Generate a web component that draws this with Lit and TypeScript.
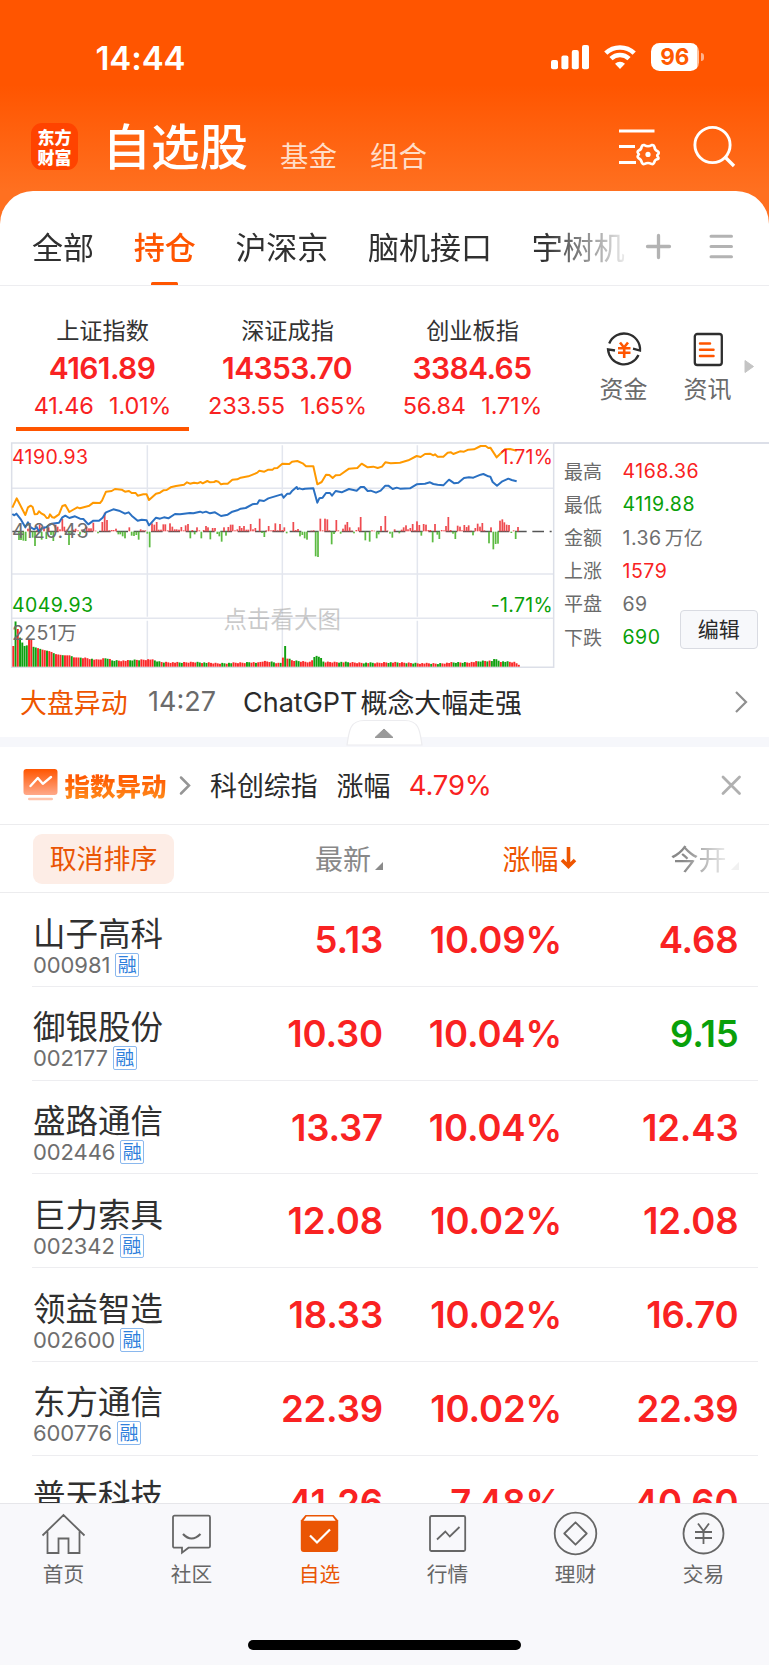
import { LitElement, html, css, svg } from "lit";
import { customElement } from "lit/decorators.js";
import { classMap } from "lit/directives/class-map.js";

const CJK = css`"Noto Sans CJK SC", "Noto Sans", sans-serif`;
const NUM = css`Inter, "Noto Sans CJK SC", sans-serif`;

const base = css`
  :host, * { box-sizing: border-box; }
  svg { display: block; overflow: visible; flex: none; }
  .red { color: #f92222; }
  .green { color: #09a009; }
  .grey { color: #6e6e6e; }
`;

/* ---------- status bar + title ---------- */
@customElement("app-header")
class AppHeader extends LitElement {
  static styles = [base, css`
    :host { display: block; height: 191px; color: #fff; flex: none; }
    .status { height: 115px; padding: 43px 65px 0 95.5px; display: flex; justify-content: space-between; }
    .time { font: 600 33px/30px ${NUM}; letter-spacing: -0.1px; }
    .signals { display: flex; align-items: flex-start; }
    .wifi { margin: 2px 15px 0 14.5px; }
    .bars { margin-top: 2px; }
    .battery { width: 48.5px; height: 28px; border-radius: 8.5px; background: linear-gradient(90deg, #fff 96%, #ffc3a0 96%); color: #ff5a00;
      font: 700 22.5px/28px ${NUM}; text-align: center; }
    .nub { width: 3.5px; height: 8px; margin: 10px 0 0 1.5px; border-radius: 0 4px 4px 0; background: rgba(255,255,255,.55); }
    .bar { height: 76px; display: flex; padding: 0 34px 0 31px; }
    .logo { width: 47px; height: 47px; margin-top: 8px; border-radius: 11px; background: #ff4300; font: 900 17px/19.5px ${CJK};
      display: flex; flex-direction: column; align-items: center; justify-content: center; }
    .title { margin: -1.5px 0 0 24.5px; font: 500 48.5px/60px ${CJK}; white-space: nowrap; }
    .sub { margin: 20px 0 0 33px; font: 400 28.5px/40px ${CJK}; color: #ffddc8; white-space: nowrap; }
    .title + .sub { margin-left: 32px; }
    .grow { flex: 1; }
    .tools { display: flex; margin-top: 9.5px; gap: 31px; }
  `];
  render() {
    return html`
      <div class="status">
        <div class="time">14:44</div>
        <div class="signals">
          <svg class="bars" width="38" height="24" fill="#fff">
            <rect x="0" y="15" width="7" height="9.2" rx="2"/><rect x="10.4" y="10.5" width="7" height="13.7" rx="2"/>
            <rect x="20.8" y="5" width="7" height="19.2" rx="2"/><rect x="31" y="0" width="7" height="24.2" rx="2"/>
          </svg>
          <svg class="wifi" width="32" height="24" fill="none" stroke="#fff" stroke-width="4.6">
            <path d="M1.8 8.2a20.4 20.4 0 0 1 28.4 0"/><path d="M7 13.6a13 13 0 0 1 18 0"/>
            <path d="M16 24l-5-5.2a7.4 7.4 0 0 1 10 0z" fill="#fff" stroke="none"/>
          </svg>
          <div class="battery">96</div><div class="nub"></div>
        </div>
      </div>
      <div class="bar">
        <div class="logo"><span>东方</span><span>财富</span></div>
        <h1 class="title">自选股</h1>
        <span class="sub">基金</span><span class="sub">组合</span>
        <div class="grow"></div>
        <div class="tools">
          <svg width="43" height="44" fill="none" stroke="#fff" stroke-width="3">
            <path d="M1 6h35.5M1 21.5h16M1 37.5h17"/>
            <path stroke-width="2.6" stroke-linejoin="round" d="M26.3 20.1Q30 22.3 33.7 20.1Q35.6 19.6 36.3 21.5Q36.7 25.2 40 26.5Q41.400 27.700 40 29.500Q38.400 30 40 32Q41 33.600 40 34Q36.700 34.300 36 37.900Q35 39.700 33.300 38.900Q30 37 26.700 38.900Q25 39.700 24 37.900Q23.300 34.300 20.300 33Q19 31.500 20.300 30Q21.600 29.400 20.300 28.500Q19 27 20.300 25.800Q23.300 24.800 23.700 21.500Q24.400 19.600 26.300 20.100z"/>
            <circle cx="30" cy="29.4" r="2.6" fill="#fff" stroke="none"/>
          </svg>
          <svg width="43" height="44" fill="none" stroke="#fff" stroke-width="2.9">
            <circle cx="20.5" cy="20" r="17.6"/><path d="M32.5 31.500l9.500 9.500" stroke-width="3.3"/>
          </svg>
        </div>
      </div>`;
  }
}

/* ---------- group tabs ---------- */
@customElement("group-tabs")
class GroupTabs extends LitElement {
  static styles = [base, css`
    :host { display: flex; height: 95px; border-bottom: 1px solid #ededf0; background: #fff; border-radius: 33px 33px 0 0; padding: 0 36px 0 32px; align-items: stretch; flex: none; }
    .scroll { display: flex; gap: 39.7px; width: 596px; overflow: hidden; flex: none;
      -webkit-mask-image: linear-gradient(90deg, #000 86%, transparent 101%); mask-image: linear-gradient(90deg, #000 86%, transparent 101%); }
    .tab { font: 400 31px/109px ${CJK}; color: #303030; white-space: nowrap; display: flex; flex-direction: column; align-items: center; height: 95px; flex: none; }
    .tab span { height: 91px; }
    .tab.on { color: #ff5500; font-weight: 500; }
    .tab.on::after { content: ""; width: 27px; height: 4px; border-radius: 1.5px; background: #ff5500; }
    .acts { flex: 1; display: flex; justify-content: space-between; align-items: center; padding: 17px 0 0 17px; }
  `];
  render() {
    const tabs = ["全部", "持仓", "沪深京", "脑机接口", "宇树机"];
    return html`
      <div class="scroll">${tabs.map((t, i) => html`<div class=${classMap({ tab: true, on: i === 1 })}><span>${t}</span></div>`)}</div>
      <div class="acts">
        <svg width="27" height="27" stroke="#b3b3b3" stroke-width="3.3" stroke-linecap="round"><path d="M2.500 13.500h22M13.500 2.500v22"/></svg>
        <svg width="24" height="27" stroke="#b3b3b3" stroke-width="3" stroke-linecap="round"><path d="M2 3.300h20.500M2 13.500h20.500M2 23.700h20.500"/></svg>
      </div>`;
  }
}

/* ---------- index cards ---------- */
@customElement("index-strip")
class IndexStrip extends LitElement {
  static styles = [base, css`
    :host { display: flex; height: 156px; padding: 25.5px 15px 11px 16px; flex: none; }
    .card { width: 173px; margin-right: 12px; display: flex; flex-direction: column; align-items: center; border-bottom: 4px solid transparent; flex: none; white-space: nowrap; }
    .card.on { border-color: #ff5500; }
    .name { font: 400 23.2px/34px ${CJK}; color: #333; }
    .price { font: 600 30px/40px ${NUM}; margin-top: 2.5px; letter-spacing: -.6px; margin-left: -1px; }
    .chg { font: 400 23.5px/32px ${NUM}; margin-top: 2px; display: flex; gap: 15.5px; letter-spacing: -.2px; }
    .tool { display: flex; flex-direction: column; align-items: center; width: 48px; margin-top: 19px; flex: none; }
    .tool + .tool { margin-left: 36px; }
    .tool span { font: 400 24px/34px ${CJK}; color: #6b6b6b; margin-top: 4px; }
    .tools { display: flex; margin-left: 28.5px; }
    .more { margin: 48.5px 0 0 12px; }
  `];
  render() {
    const cards = [["上证指数", "4161.89", "41.46", "1.01%"], ["深证成指", "14353.70", "233.55", "1.65%"], ["创业板指", "3384.65", "56.84", "1.71%"]];
    return html`
      ${cards.map((c, i) => html`<div class=${classMap({ card: true, on: i === 0 })}>
        <div class="name">${c[0]}</div><div class="price red">${c[1]}</div>
        <div class="chg red"><span>${c[2]}</span><span>${c[3]}</span></div></div>`)}
      <div class="tools">
        <div class="tool">
          <svg width="36" height="36" fill="none" stroke="#2e2e2e" stroke-width="2.3">
            <path d="M3.200 12.500A16 16 0 0 1 34 19.500l-7-1.800"/><path d="M32.500 24A16 16 0 0 1 2 18.300l7 1.200"/>
            <path d="M14 11.500l4 5 4-5M12 17.200h12.500M12 21.800h12.500M18.200 16v11" stroke="#ff5500" stroke-width="2.6"/>
          </svg><span>资金</span>
        </div>
        <div class="tool">
          <svg width="36" height="36" fill="none" stroke="#2e2e2e" stroke-width="2.3">
            <rect x="4.8" y="3" width="27" height="31" rx="2.5"/>
            <path d="M10 12.500h10M10 18.800h13.500M10 25h13.500" stroke="#ff5500" stroke-width="2.5" stroke-linecap="round"/>
          </svg><span>资讯</span>
        </div>
      </div>
      <svg class="more" width="10" height="13"><path d="M1 .5l8.500 6-8.500 6z" fill="#c4c4c4" stroke="#c4c4c4" stroke-linejoin="round"/></svg>`;
  }
}

/* ---------- intraday chart ---------- */
const ORANGE = "37,218 50,190 76,240 84,217 92,212 98,216 104,238 112,237 117,229 125,236 133,240 140,249 146,248 150,238 157,247 163,248 177,238 187,213 196,210 208,231 218,225 232,217 240,220 268,212 280,203 300,204 306,197 318,170 335,168 345,162 365,164 375,170 387,168 395,174 407,174 413,182 430,178 440,178 447,195 468,176 480,173 490,166 500,165 512,157 528,153 552,149 561,142 570,146 582,143 592,145 602,141 608,145 622,138 630,142 642,141 648,138 655,140 663,148 671,146 683,146 697,134 712,133 722,128 745,124 760,118 772,113 778,107 793,110 805,104 818,104 822,100 832,99 847,86 868,87 876,80 892,78 908,85 918,94 940,94 952,148 965,141 978,119 988,120 998,129 1007,121 1020,120 1047,101 1072,99 1085,86 1103,97 1120,95 1133,99 1146,95 1156,82 1172,85 1200,83 1225,76 1250,63 1262,66 1275,57 1290,56 1300,61 1305,58 1313,65 1330,65 1343,53 1353,52 1360,57 1380,49 1392,50 1405,44 1422,43 1442,33 1457,33 1465,39 1471,38 1490,67 1515,43 1530,42 1550,47";
const BLUE = "37,237 43,241 49,236 63,254 76,277 84,262 92,277 103,283 110,276 117,290 125,280 138,277 145,272 155,266 177,263 187,247 196,242 208,249 225,244 240,251 250,252 265,268 280,257 297,257 308,248 318,232 340,223 357,227 375,236 386,232 395,242 413,257 425,254 440,256 447,271 468,248 480,251 492,247 505,250 525,237 540,238 570,234 580,235 600,230 608,233 618,230 630,235 645,232 663,243 683,239 697,230 712,226 722,221 737,219 757,208 772,206 778,196 792,198 805,190 845,178 851,188 862,176 870,176 877,167 890,156 893,162 898,160 908,163 915,161 940,160 952,203 958,190 968,188 978,174 990,174 996,182 1007,168 1025,172 1047,162 1070,167 1082,156 1092,156 1103,168 1112,167 1128,173 1142,167 1156,152 1165,152 1178,162 1190,158 1200,161 1230,160 1250,148 1275,146 1290,142 1300,147 1313,149 1330,151 1347,134 1363,145 1375,143 1392,129 1407,127 1420,128 1442,119 1450,117 1465,124 1471,125 1478,141 1491,152 1507,139 1525,131 1535,135 1550,139";
/* momentum bars: x, signed height (positive above the axis) */
const MOM: number[][] = [[57,-25],[63,-25],[70,-27],[77,-28],[84,8],[90,16],[98,-18],[105,-43],[112,5],[119,20],[125,-24],[132,14],[139,-22],[146,12],[153,-10],[160,-28],[167,20],[173,14],[180,6],[187,38],[193,14],[200,5],[207,-40],[214,-10],[221,5],[227,8],[234,3],[240,-9],[247,4],[254,-4],[260,14],[267,9],[273,9],[280,26],[287,2],[294,-5],[307,28],[314,56],[321,34],[328,3],[335,4],[341,4],[348,8],[355,-8],[361,-8],[368,-14],[375,-20],[388,12],[395,-12],[402,-13],[409,-10],[416,-24],[422,6],[429,3],[436,3],[442,-6],[449,-47],[456,24],[463,20],[470,28],[476,5],[483,5],[490,21],[496,21],[503,3],[510,24],[517,14],[524,6],[530,6],[537,5],[544,13],[551,3],[557,18],[564,22],[571,-20],[577,4],[584,-8],[591,12],[598,3],[604,-20],[611,4],[618,16],[624,12],[631,-23],[638,10],[645,10],[652,-7],[658,-14],[665,-30],[672,12],[678,-12],[685,13],[692,20],[698,20],[705,3],[712,6],[719,16],[725,10],[732,16],[739,5],[745,5],[752,22],[759,6],[766,10],[779,38],[786,-4],[793,-16],[799,3],[806,16],[813,3],[820,4],[826,24],[833,3],[840,22],[847,4],[853,12],[860,-5],[880,28],[887,4],[894,7],[900,-14],[907,-10],[914,-20],[921,-24],[934,2],[941,3],[947,-74],[954,-76],[961,38],[968,3],[975,38],[982,36],[988,3],[995,-38],[1002,-7],[1009,34],[1015,3],[1022,-6],[1029,8],[1036,20],[1042,28],[1049,12],[1056,2],[1062,-5],[1069,4],[1076,12],[1082,43],[1096,-26],[1109,-30],[1116,3],[1123,2],[1130,-20],[1136,-8],[1143,16],[1156,46],[1163,2],[1170,-6],[1177,-18],[1184,6],[1198,-5],[1205,5],[1211,12],[1218,18],[1224,6],[1231,10],[1238,22],[1245,3],[1251,30],[1258,19],[1264,-12],[1271,22],[1278,20],[1285,4],[1291,4],[1298,-32],[1305,22],[1312,-9],[1318,-22],[1325,4],[1332,3],[1338,16],[1345,43],[1352,4],[1359,-6],[1366,-22],[1373,17],[1380,14],[1386,3],[1393,19],[1400,13],[1406,18],[1413,2],[1419,-11],[1426,10],[1433,23],[1440,14],[1447,25],[1453,3],[1467,-35],[1473,12],[1480,-53],[1487,-37],[1494,-36],[1500,32],[1507,36],[1513,27],[1520,20],[1527,19],[1534,-4],[1541,3],[1547,-22],[1554,13]];
/* volume envelope: x, height */
const VOL: number[][] = [[40,62],[45,138],[52,115],[58,90],[65,74],[72,62],[80,64],[86,84],[92,84],[98,60],[115,55],[130,50],[150,46],[165,38],[190,34],[210,34],[220,28],[245,27],[260,26],[290,20],[320,26],[335,19],[380,18],[400,20],[450,22],[480,14],[540,12],[585,14],[650,10],[735,12],[750,14],[775,11],[785,16],[810,15],[838,10],[846,15],[852,62],[859,26],[875,19],[890,17],[930,14],[943,28],[952,34],[962,25],[970,14],[1020,14],[1070,12],[1130,11],[1155,13],[1200,12],[1310,9],[1350,12],[1410,13],[1450,17],[1475,17],[1480,25],[1500,16],[1545,13],[1553,7]];
const START = "RGRGGGGRRGGRGRRGRRGRRRGRRRGRRRGRRRR";

function volumeAt(x: number) {
  const k = VOL.findIndex((p) => p[0] >= x);
  if (k === 0) return VOL[0][1];
  if (k < 0) return VOL[VOL.length - 1][1];
  const [x0, h0] = VOL[k - 1], [x1, h1] = VOL[k];
  return h0 + ((h1 - h0) * (x - x0)) / (x1 - x0);
}

function volumeBars() {
  const out = [];
  for (let i = 0; i < 226; i++) {
    const x = 37 + i * 6.74;
    const r = ((i * 7919 + 31) % 97) / 97;
    const h = i === 121 ? 62 : volumeAt(x + 2) + (i > 30 ? (r - 0.5) * 4 : 0);
    const green = i < START.length ? START[i] === "G" : i === 121 || (i > 134 && i < 138) || (i > 212 && i < 217) || Math.sin(i * 1.7) + Math.sin(i * 0.61) > 0.35;
    out.push(svg`<rect x=${x} y=${695 - h} width="5.8" height=${h} fill=${green ? "#10a010" : "#fa2828"}/>`);
  }
  return out;
}

@customElement("market-chart")
class MarketChart extends LitElement {
  static styles = [base, css`
    :host { display: flex; height: 230px; flex: none; }
    .plot { position: relative; width: 554px; height: 230px; flex: none; }
    .lab { position: absolute; font: 400 19.5px/24px ${NUM}; letter-spacing: .4px; white-space: nowrap; }
    .hi { left: 12px; top: 2.5px; } .mid { left: 12px; top: 77px; } .lo { left: 12px; top: 151px; } .vol { left: 12px; top: 179px; }
    .rhi { right: 1px; top: 2.5px; letter-spacing: .2px; } .rlo { right: 1px; top: 151px; letter-spacing: .3px; }
    .hint { left: 223.5px; top: 158.5px; font: 400 23.5px/34px ${CJK}; letter-spacing: 0; color: rgba(150,150,150,.5); }
    .side { flex: 1; border-top: 2px solid #dcdfe8; padding: 11px 0 0 10px; position: relative; }
    .row { display: flex; height: 33.2px; align-items: center; color: #6b6b6b; font: 400 19px/33px ${CJK}; }
    .row span { width: 58.5px; padding-bottom: 3px; }
    .row b { font: 400 19.5px/33px ${NUM}; letter-spacing: .5px; white-space: nowrap; }
    .row b i { font: 400 19px/33px ${CJK}; margin-left: 3px; letter-spacing: 0; }
    .edit { position: absolute; right: 11px; top: 165.5px; width: 78.5px; height: 39px; border: 1px solid #d9dbe2; border-radius: 4px; background: #f7f8fb;
      font: 400 21px/35px ${CJK}; color: #2a2a2a; text-align: center; }
  `];
  render() {
    const rows = [["最高", "4168.36", "red"], ["最低", "4119.88", "green"], ["金额", "1.36", "grey", "万亿"], ["上涨", "1579", "red"], ["平盘", "69", "grey"], ["下跌", "690", "green"]];
    return html`
      <div class="plot">
        <svg width="554" height="230" viewBox="0 21 1662 690">
          <g fill="none" stroke="#e3e6ee" stroke-width="4.5">
            <path d="M35 160H1661M35 417H1661M35 550H1661" />
            <path d="M442 31V545M847 31V545M1252 31V545M442 557V697M847 557V697M1252 557V697"/>
            <path d="M35 697H1661V24H35z" stroke="#dcdfe8"/>
          </g>
          <path d="M37 289.5H1655" stroke="#555" stroke-width="4" stroke-dasharray="35 17"/>
          ${MOM.map(([x, h]) => svg`<rect x=${x - 2.6} y=${h > 0 ? 289 - h : 290} width="5.2" height=${Math.abs(h)} fill=${h > 0 ? "#ee4b50" : "#5cbb42"}/>`)}
          ${volumeBars()}
          <g fill="none" stroke-width="6" stroke-linejoin="round">
            <polyline points=${ORANGE} stroke="#ff9900"/><polyline points=${BLUE} stroke="#2a70c2"/>
          </g>
        </svg>
        <span class="lab hi red">4190.93</span><span class="lab mid grey">4120.43</span><span class="lab lo green">4049.93</span>
        <span class="lab vol grey">2251万</span><span class="lab rhi red">1.71%</span><span class="lab rlo green">-1.71%</span>
        <span class="lab hint">点击看大图</span>
      </div>
      <div class="side">
        ${rows.map((r) => html`<div class="row"><span>${r[0]}</span><b class=${r[2]}>${r[1]}${r[3] ? html`<i>${r[3]}</i>` : ""}</b></div>`)}
        <div class="edit">编辑</div>
      </div>`;
  }
}

/* ---------- news + index movement ---------- */
@customElement("alert-bars")
class AlertBars extends LitElement {
  static styles = [base, css`
    :host { display: block; flex: none; }
    .news { height: 65px; display: flex; align-items: center; padding: 0 22px 5px 20px; white-space: nowrap; font: 400 26.9px/40px ${CJK}; color: #2a2a2a; }
    .tag { color: #ee5500; width: 128px; }
    .t { font: 400 27px/40px ${NUM}; color: #6b6b6b; width: 95px; }
    .latin { font: 400 27px/40px ${NUM}; margin-right: 3px; padding-top: 1px; }
    .grow { flex: 1; }
    .gap { height: 10px; background: #f6f7fb; position: relative; }
    .handle { position: absolute; left: 346px; top: -18px; }
    .move { height: 78px; border-bottom: 1px solid #ececee; display: flex; align-items: center; padding: 0 28px 1px 23px; font: 400 26.9px/40px ${CJK}; color: #2a2a2a; white-space: nowrap; }
    .brand { font-weight: 900; font-size: 25.5px; margin: 0 13px 0 6.5px; background: linear-gradient(180deg, #ff5500 25%, #ff8a1a 85%); -webkit-background-clip: text; background-clip: text; color: transparent; }
    .a { margin-left: 20.5px; } .b { margin-left: 19px; }
    .pct { font: 400 27.5px/40px ${NUM}; margin-left: 18.5px; letter-spacing: -.2px; }
  `];
  render() {
    return html`
      <div class="news"><span class="tag">大盘异动</span><span class="t">14:27</span><span class="latin">ChatGPT</span><span>概念大幅走强</span>
        <div class="grow"></div>
        <svg width="12" height="22" fill="none" stroke="#8f8f8f" stroke-width="2.2"><path d="M1 1l10 10-10 10"/></svg></div>
      <div class="gap">
        <svg class="handle" width="77" height="28"><path d="M1 26C3 14 3 1.500 18 1.500H59C74 1.500 74 14 76 26z" fill="#fff" stroke="#ececef" stroke-width="1.2"/>
          <path d="M29 18.500l9-8.500 9 8.500z" fill="#999" stroke="#999" stroke-width="1" stroke-linejoin="round"/></svg>
      </div>
      <div class="move">
        <svg width="35" height="32"><defs><linearGradient id="g" x1="0" y1="0" x2="0" y2="1"><stop offset="0" stop-color="#ff5500"/><stop offset="1" stop-color="#ffa98a"/></linearGradient></defs>
          <rect x=".5" y="0" width="34" height="26" rx="3" fill="url(#g)"/><path d="M7.500 17l7.300-8 5 5.800L28 8" fill="none" stroke="#fff" stroke-width="2.4" stroke-linecap="round" stroke-linejoin="round"/>
          <rect x="5" y="28.7" width="25" height="2.6" rx="1.3" fill="#ffc4ac"/></svg>
        <span class="brand">指数异动</span>
        <svg width="10" height="19" fill="none" stroke="#959595" stroke-width="2.5" stroke-linecap="round"><path d="M1 1.500l8 8-8 8"/></svg>
        <span class="a">科创综指</span><span class="b">涨幅</span><span class="pct red">4.79%</span>
        <div class="grow"></div>
        <svg width="20" height="20" stroke="#b0b0b0" stroke-width="2.8" stroke-linecap="round"><path d="M2 2l16.500 16.500M18.500 2L2 18.500"/></svg>
      </div>`;
  }
}

/* ---------- stock table ---------- */
@customElement("stock-table")
class StockTable extends LitElement {
  static styles = [base, css`
    :host { display: block; flex: 1; overflow: hidden; min-height: 0; }
    .head, .row { display: grid; grid-template-columns: 180px 171px 179px 176.5px; margin: 0 11px 0 32px; }
    .head { height: 68px; margin: 0; padding-left: 32px; border-bottom: 1px solid #ececee; align-items: center; font: 400 28px/40px ${CJK}; color: #888; }
    .cancel { width: 141px; height: 50px; margin-left: 1px; border-radius: 9px; background: #fdede6; color: #ea5504; font: 400 26.9px/47px ${CJK}; text-align: center; }
    .h { display: flex; justify-content: flex-end; align-items: center; padding-bottom: 2px; }
    .tri { margin: 17px 0 0 4px; }
    .up { color: #ee5500; margin-right: -13.5px; }
    .up svg { margin-left: 2px; }
    .fade { -webkit-mask-image: linear-gradient(90deg, #000 68%, rgba(0,0,0,.12) 94%); mask-image: linear-gradient(90deg, #000 68%, rgba(0,0,0,.12) 94%); }
    .row { height: 93.75px; border-bottom: 1.5px solid #ededf0; }
    .name { font: 400 32.5px/38px ${CJK}; color: #303030; padding: 19.5px 0 0 1px; height: 59.5px; white-space: nowrap; }
    .code { display: flex; align-items: center; padding-left: 1px; font: 400 22px/24px ${NUM}; color: #6e6e6e; letter-spacing: -.1px; }
    .mg { width: 24px; height: 24px; margin-left: 5px; border: 1.3px solid #8ab8ee; border-radius: 2px; color: #2f7fdc; font: 400 19px/20px ${CJK}; display: flex; justify-content: center; letter-spacing: 0; }
    .v { font: 600 36.5px/94px ${NUM}; text-align: right; letter-spacing: -.15px; white-space: nowrap; }
  `];
  render() {
    const rows = [
      ["山子高科", "000981", "5.13", "10.09%", "4.68", "red"], ["御银股份", "002177", "10.30", "10.04%", "9.15", "green"],
      ["盛路通信", "002446", "13.37", "10.04%", "12.43", "red"], ["巨力索具", "002342", "12.08", "10.02%", "12.08", "red"],
      ["领益智造", "002600", "18.33", "10.02%", "16.70", "red"], ["东方通信", "600776", "22.39", "10.02%", "22.39", "red"],
      ["普天科技", "", "41.26", "7.48%", "40.60", "red"]];
    const tri = html`<svg class="tri" width="8" height="8"><path d="M8 0v8H0z" fill="#8a8a8a"/></svg>`;
    return html`
      <div class="head"><div class="cancel">取消排序</div><div class="h">最新${tri}</div>
        <div class="h up">涨幅<svg width="15" height="22" fill="none" stroke="#ee5500" stroke-width="3.6"><path d="M7.500 0v19M1 13l6.500 6.500L14 13"/></svg></div>
        <div class="h fade">今开${tri}</div></div>
      ${rows.map((r) => html`<div class="row">
        <div><div class="name">${r[0]}</div>${r[1] ? html`<div class="code">${r[1]}<span class="mg">融</span></div>` : ""}</div>
        <div class="v red">${r[2]}</div><div class="v red">${r[3]}</div><div class="v ${r[5]}">${r[4]}</div></div>`)}`;
  }
}

/* ---------- bottom navigation ---------- */
@customElement("tab-bar")
class TabBar extends LitElement {
  static styles = [base, css`
    :host { display: flex; flex-direction: column; align-items: center; height: 162.5px; background: #f8f8fb; border-top: 1.5px solid #e6e6ea; flex: none; }
    .items { display: grid; grid-template-columns: repeat(6, 128px); width: 769px; height: 136px; margin-left: -1px; flex: none; }
    .it { display: flex; flex-direction: column; align-items: center; padding-top: 8.5px; color: #666; font: 400 20.7px/30px ${CJK}; }
    .it span { margin-top: 3px; }
    .it.on { color: #ea5504; }
    .home { width: 273px; height: 10px; border-radius: 5px; background: #000; flex: none; }
  `];
  render() {
    const g = [
      svg`<path d="M1.500 23.500L22.500 3l21 20.500M6.500 19.500V41h11V26.500h10V41h11V19.500"/>`,
      svg`<path d="M5.500 3.700h34a1.500 1.500 0 0 1 1.500 1.500v29a1.500 1.500 0 0 1-1.500 1.500H19.500l-6.500 5v-5H5.500a1.500 1.500 0 0 1-1.500-1.500v-29a1.500 1.500 0 0 1 1.500-1.500z"/><path d="M14 22q8.500 9 17.500 0" stroke-width="2.2"/>`,
      svg`<path d="M8.500 3h28l4.700 5.500V37a3 3 0 0 1-3 3H6.800a3 3 0 0 1-3-3V8.500z" fill="#ea5504" stroke="none"/><path d="M9.500 4.600h26l3.200 4.200H6.500z" fill="#fff" stroke="none"/><path d="M13 23.500l7 7L33 17.500" stroke="#fff" stroke-width="2.2"/>`,
      svg`<rect x="5" y="4" width="35.2" height="35" rx="1.5"/><path d="M12 27.500l8.300-8 4.500 5L34.500 15"/>`,
      svg`<circle cx="22.5" cy="21.5" r="20.8"/><path d="M22.500 10.300L33.700 21.500 22.500 32.700 11.300 21.500z" stroke-linejoin="round"/>`,
      svg`<circle cx="22.5" cy="21.5" r="20"/><path d="M17 11.500l5.500 7.500 5.500-7.500M14 20h17M14 26h17M22.500 19v13"/>`];
    const n = ["首页", "社区", "自选", "行情", "理财", "交易"];
    return html`<div class="items">${n.map((t, i) => html`<div class=${classMap({ it: true, on: i === 2 })}>
      <svg width="45" height="43" fill="none" stroke="#666" stroke-width="1.8">${g[i]}</svg><span>${t}</span></div>`)}</div><div class="home"></div>`;
  }
}

@customElement("app-root")
class AppRoot extends LitElement {
  static styles = css`
    :host { display: flex; flex-direction: column; width: 769px; height: 1665px; overflow: hidden; background: linear-gradient(180deg, #ff5500 0, #ff5500 85px, #ff7020 191px, #ff7020 230px, #fff 231px); }
  `;
  render() {
    return html`<app-header></app-header><group-tabs></group-tabs><index-strip></index-strip><market-chart></market-chart>
      <alert-bars></alert-bars><stock-table></stock-table><tab-bar></tab-bar>`;
  }
}
